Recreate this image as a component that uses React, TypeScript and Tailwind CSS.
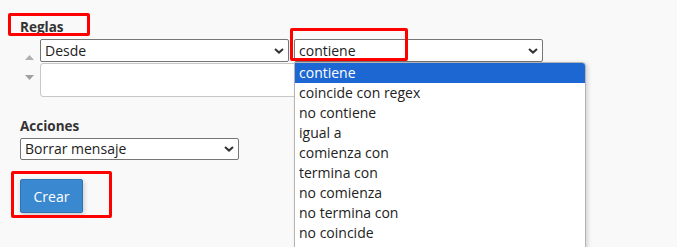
import React from 'react';

const Chevron = () => (
    <svg width="10" height="6" viewBox="0 0 10 6" className="shrink-0">
        <path d="M1 1 L5 4.6 L9 1" fill="none" stroke="#333" strokeWidth="2" />
    </svg>
);

const FakeSelect = ({ value, className }: { value: string; className: string }) => (
    <div className={`flex items-center justify-between bg-white border border-[#767676] rounded-[2px] pl-[4px] pr-[4px] text-[14px] text-[#222] ${className}`}>
        <span className="leading-[20px]">{value}</span>
        <Chevron />
    </div>
);

const options = [
    'contiene',
    'coincide con regex',
    'no contiene',
    'igual a',
    'comienza con',
    'termina con',
    'no comienza',
    'no termina con',
    'no coincide',
];

export default function App() {
    return (
        <div
            className="relative w-[677px] h-[247px] overflow-hidden bg-[#f9f9f9] text-[#333]"
            style={{ fontFamily: '"Open Sans", "Noto Sans", sans-serif' }}
        >
            <div className="pl-[20px]">
                {/* Reglas */}
                <div className="relative mt-[18px] h-[18px] leading-[18px] text-[13.5px] font-bold text-[#333]">
                    Reglas
                    <div className="absolute left-[-12px] top-[-5px] w-[82px] h-[23px] border-[3px] border-[#ff0000] rounded-[2px]" />
                </div>

                <div className="flex mt-[3px]">
                    <div className="w-[20px] flex flex-col items-center pt-[16px] gap-[15px] pr-[2px]">
                        <svg width="9" height="5" viewBox="0 0 9 5"><path d="M0 5 L4.5 0 L9 5 Z" fill="#b0b0b0" /></svg>
                        <svg width="9" height="5" viewBox="0 0 9 5"><path d="M0 0 L4.5 5 L9 0 Z" fill="#a0a0a0" /></svg>
                    </div>
                    <div className="flex flex-col w-[503px]">
                        <div className="flex gap-[5px]">
                            <FakeSelect value="Desde" className="w-[249px] h-[23px]" />
                            <div className="relative">
                                <FakeSelect value="contiene" className="w-[249px] h-[23px]" />
                                <div className="absolute left-[-4px] top-[-11px] w-[118px] h-[33px] border-[3px] border-[#ff0000] rounded-[2px]" />
                            </div>
                        </div>
                        <div className="mt-[1px] h-[34px] bg-white border border-[#c8c8c8] rounded-[3px]" />
                    </div>
                </div>

                {/* Acciones */}
                <div className="mt-[20px] h-[18px] leading-[18px] text-[13.5px] font-bold text-[#333]">Acciones</div>
                <FakeSelect value="Borrar mensaje" className="mt-[3px] w-[219px] h-[22px]" />

                <div className="relative mt-[19px] w-fit">
                    <button className="h-[34px] w-[63px] bg-[#3a88cf] border border-[#2f75b5] rounded-[2px] text-white text-[14px] shadow-[1px_2px_5px_rgba(0,0,0,0.2)]">
                        Crear
                    </button>
                    <div className="absolute left-[-9px] top-[-8px] w-[101px] h-[47px] border-[3px] border-[#ff0000] rounded-[2px]" />
                </div>
            </div>

            {/* open dropdown list */}
            <div className="absolute left-[294px] top-[62px] w-[292px] h-[210px] bg-white border border-[#b4b4b4] rounded-tr-[4px] shadow-[2px_1px_4px_rgba(0,0,0,0.15)] text-[14px] text-[#222]">
                {options.map((o, i) => (
                    <div
                        key={o}
                        className={`h-[20px] leading-[20px] pl-[4px] ${i === 0 ? 'bg-[#1c67d2] text-white rounded-tr-[3px]' : ''}`}
                    >
                        {o}
                    </div>
                ))}
            </div>
        </div>
    );
}
